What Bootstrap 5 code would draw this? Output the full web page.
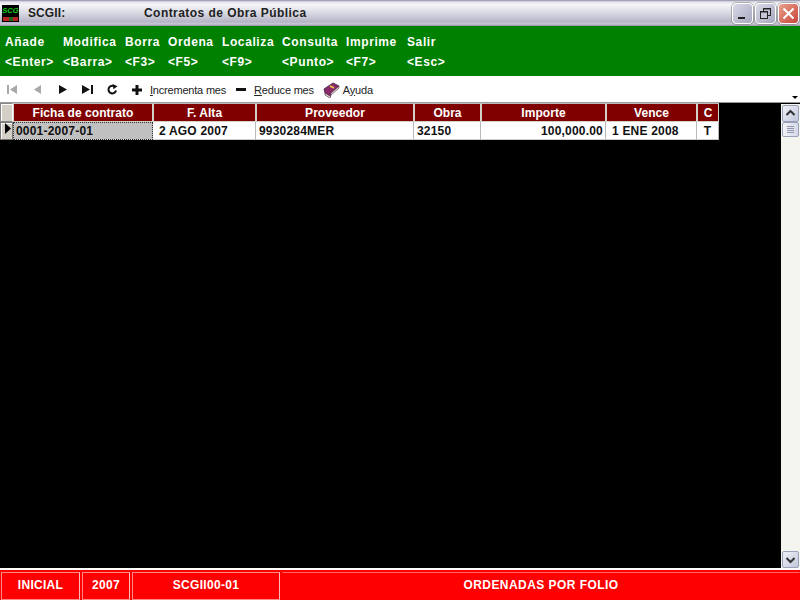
<!DOCTYPE html>
<html lang="es">
<head>
<meta charset="utf-8">
<title>SCGII</title>
<link href="https://cdn.jsdelivr.net/npm/bootstrap@5.3.0/dist/css/bootstrap.min.css" rel="stylesheet">
<style>
html,body{height:100%;margin:0;overflow:hidden}
body{width:800px;height:600px;font-family:"Liberation Sans",Arial,sans-serif;background:#000}
.win{width:800px;height:600px}
.titlebar{height:26px;flex:none;background:linear-gradient(#8d8da6 0,#e6e6ee 2px,#f4f4f8 5px,#d5d5e0 14px,#b4b4c6 22px,#c9c9d8 24px,#8f8f9f 26px);color:#222;font-weight:700;font-size:12px;letter-spacing:.45px;padding-left:2px}
.appico{width:17px;height:17px;background:#000;margin-right:9px;flex:none;overflow:hidden;display:flex;flex-direction:column;align-items:center;line-height:10px;font-size:7.5px;font-style:italic;color:#19d219;letter-spacing:0;padding-top:1px}
.appico::after{content:"";display:block;width:15px;height:4px;margin-top:1px;background:linear-gradient(90deg,#b22 0 40%,#262 40% 70%,#b22 70%)}
.apptitle{width:116px;letter-spacing:.1px}
.winbtn{width:21px;height:21px;border-radius:4px;border:1px solid #fff;box-shadow:0 0 0 .5px #777;background:linear-gradient(135deg,#d9dae6,#a6a8c0);margin-right:2px;flex:none}
.winbtn svg{display:block}
.winbtn-x{background:linear-gradient(135deg,#e9a08c,#c8453a);margin-right:1px}
.menubar{height:50px;flex:none;background:#008000;color:#fff;font-weight:700;font-size:12px;letter-spacing:.6px;display:grid;grid-template-columns:58px 62px 43px 54px 60px 64px 61px auto;grid-template-rows:20px 20px;padding:6px 0 0 5px;line-height:21px}
.toolstrip{height:27px;flex:none;background:#fff;border-bottom:1px solid #9a9a9a;font-size:11px;color:#222;letter-spacing:-.2px;position:relative;padding-top:1px}
.toolstrip svg{display:block;flex:none}
.tool{width:25px;display:flex;justify-content:center}
.toolbtn{display:flex;align-items:center;gap:8px}
.toolbtn span{padding-top:1px}
.plus-btn{margin-left:7px}
.minus-btn{margin-left:10px}
.help-btn{margin-left:9px;gap:3px}
.overflow-caret{position:absolute;right:2px;bottom:3px;border-left:3px solid transparent;border-right:3px solid transparent;border-top:3px solid #000}
.gridarea{flex:1 1 0;min-height:0;background:#000;position:relative}
.tablewrap{flex:1 1 0;min-width:0}
.gridtable{table-layout:fixed;width:719px;margin:0;border-collapse:separate;border-spacing:0;font-size:12px;font-weight:700;letter-spacing:.2px;--bs-table-bg:transparent}
.gridtable th,.gridtable td{padding:0 3px;border:0;white-space:nowrap;overflow:hidden;box-shadow:none}
.gridtable th{height:19px;background:#800000;color:#fff;text-align:center;line-height:16px;border:1px solid #d4d0c8;border-top-color:#bbb;letter-spacing:.05px}
.gridtable td{height:18px;padding-top:1px;background:#fff;color:#111;line-height:16px;border-right:1px solid #b8b8b8;border-bottom:1px solid #ccc}
.gridtable .corner{background:#d4d0c8;border:1px solid #888;border-right:1px solid #fff;box-shadow:inset 1px 1px #fff}
.gridtable .rowmark{background:#d4d0c8;padding:0;border:1px solid #777;box-shadow:inset 1px 1px #fff}
.gridtable .current{background:#c0c0c0;outline:1px dotted #333;outline-offset:-1px}
.gridtable .date-cell{padding-left:6px}
.gridtable .money-cell{padding-right:2px}
.w0{width:13px}.w1{width:140px}.w2{width:103px}.w3{width:158px}.w4{width:67px}.w5{width:125px}.w6{width:91px}.w7{width:22px}
.vscroll{width:19px;flex:none;background:#f5f5f0;margin-top:1px;padding:1px 1px 0 1px}
.sbtn{width:17px;height:17px;border:1px solid #9aa0b8;border-radius:2px;background:linear-gradient(135deg,#eef0f6,#c2c8dc);flex:none}
.sthumb{height:15px;display:flex;flex-direction:column;justify-content:center;gap:1px;align-items:center;background:linear-gradient(90deg,#f2f3f8,#d5d9e8)}
.sthumb i{display:block;width:7px;height:1px;background:#8f96ad}
.statusbar{height:32px;flex:none;border-top:2px solid #fff;background:#f00;padding:2px 0 0 1px;color:#fff;font-size:12px;font-weight:700;letter-spacing:.3px;gap:2px}
.statusbar>div{border:1px solid #f88;border-right-color:#fbb;display:flex;align-items:center;justify-content:center;height:100%;padding-bottom:3px}
.s1{width:79px}.s2{width:48px}.s3{width:148px}.s4{flex:1 1 0;letter-spacing:.45px;border-color:#f00 !important;border-top-color:#f66 !important}
</style>
</head>
<body>
<div class="win d-flex flex-column">
  <div class="titlebar d-flex align-items-center">
    <div class="appico">SCG</div>
    <div class="apptitle">SCGII:</div>
    <div class="flex-grow-1">Contratos de Obra Pública</div>
    <div class="winbtn"><svg width="19" height="19" viewBox="0 0 19 19"><rect x="5" y="13" width="7" height="2" fill="#222"/></svg></div>
    <div class="winbtn"><svg width="19" height="19" viewBox="0 0 19 19" fill="none" stroke="#222"><rect x="7.5" y="4.5" width="7" height="7"/><rect x="4.5" y="7.5" width="7" height="7" fill="#c4c6d8"/><path d="M7 5h8M4 8h8"/></svg></div>
    <div class="winbtn winbtn-x"><svg width="19" height="19" viewBox="0 0 19 19"><path d="M4.5 4.5l10 10M14.5 4.5l-10 10" stroke="#fff" stroke-width="2"/></svg></div>
  </div>

  <div class="menubar">
    <div>Añade</div><div>Modifica</div><div>Borra</div><div>Ordena</div><div>Localiza</div><div>Consulta</div><div>Imprime</div><div>Salir</div>
    <div>&lt;Enter&gt;</div><div>&lt;Barra&gt;</div><div>&lt;F3&gt;</div><div>&lt;F5&gt;</div><div>&lt;F9&gt;</div><div>&lt;Punto&gt;</div><div>&lt;F7&gt;</div><div>&lt;Esc&gt;</div>
  </div>

  <div class="toolstrip d-flex align-items-center">
    <div class="tool"><svg width="11" height="9" viewBox="0 0 11 9" fill="#a8a8a8"><rect x="0" y="0" width="2" height="9"/><path d="M10 0v9L3 4.500z"/></svg></div>
    <div class="tool"><svg width="8" height="9" viewBox="0 0 8 9" fill="#a8a8a8"><path d="M7 0v9L0 4.500z"/></svg></div>
    <div class="tool"><svg width="8" height="9" viewBox="0 0 8 9" fill="#111"><path d="M0 0v9l8-4.500z"/></svg></div>
    <div class="tool"><svg width="11" height="9" viewBox="0 0 11 9" fill="#111"><path d="M0 0v9l8-4.500z"/><rect x="9" y="0" width="2" height="9"/></svg></div>
    <div class="tool"><svg width="11" height="11" viewBox="0 0 11 11" fill="none"><path d="M9 6.500A3.800 3.800 0 1 1 6.500 2" stroke="#111" stroke-width="2"/><path d="M5.500 0l5 2.200-4 3z" fill="#111"/></svg></div>
    <div class="toolbtn plus-btn"><svg width="10" height="10" viewBox="0 0 10 10" fill="#111"><path d="M3.500 0h3v3.500H10v3H6.500V10h-3V6.500H0v-3h3.500z"/></svg><span><u>I</u>ncrementa mes</span></div>
    <div class="toolbtn minus-btn"><svg width="10" height="10" viewBox="0 0 10 10" fill="#111"><rect x="0" y="3" width="10" height="3"/></svg><span><u>R</u>educe mes</span></div>
    <div class="toolbtn help-btn"><svg width="17" height="16" viewBox="0 0 17 16"><path d="M1 7L10 1l6 3-8 7-1 4-5-4z" fill="#8a2a6a" stroke="#3a1a3a" stroke-width=".8"/><path d="M2 11l5 3 1-3 8-7v2l-8 7-1 3-5-3z" fill="#e8e0d0" stroke="#3a1a3a" stroke-width=".6"/><path d="M7 4l4 2" stroke="#f0d040" stroke-width="1.500"/></svg><span>A<u>y</u>uda</span></div>
    <span class="overflow-caret"></span>
  </div>

  <div class="gridarea d-flex">
    <div class="tablewrap">
      <table class="table gridtable">
        <thead>
          <tr>
            <th class="corner w0"></th>
            <th class="w1">Ficha de contrato</th>
            <th class="w2">F. Alta</th>
            <th class="w3">Proveedor</th>
            <th class="w4">Obra</th>
            <th class="w5">Importe</th>
            <th class="w6">Vence</th>
            <th class="w7">C</th>
          </tr>
        </thead>
        <tbody>
          <tr>
            <td class="rowmark"><svg class="d-block ms-1" width="6" height="11" viewBox="0 0 6 11"><path d="M0 0v11l6-5.500z" fill="#000"/></svg></td>
            <td class="current">0001-2007-01</td>
            <td class="date-cell">2 AGO 2007</td>
            <td>9930284MER</td>
            <td>32150</td>
            <td class="text-end money-cell">100,000.00</td>
            <td class="date-cell">1 ENE 2008</td>
            <td class="text-center">T</td>
          </tr>
        </tbody>
      </table>
    </div>
    <div class="vscroll d-flex flex-column">
      <div class="sbtn"><svg class="d-block" width="15" height="15" viewBox="0 0 15 15"><path d="M3.500 9l4-4 4 4" fill="none" stroke="#333" stroke-width="2"/></svg></div>
      <div class="sbtn sthumb"><i></i><i></i><i></i><i></i></div>
      <div class="flex-grow-1"></div>
      <div class="sbtn"><svg class="d-block" width="15" height="15" viewBox="0 0 15 15"><path d="M3.500 6l4 4 4-4" fill="none" stroke="#333" stroke-width="2"/></svg></div>
    </div>
  </div>

  <div class="statusbar d-flex">
    <div class="s1">INICIAL</div>
    <div class="s2">2007</div>
    <div class="s3">SCGII00-01</div>
    <div class="s4">ORDENADAS POR FOLIO</div>
  </div>
</div>
</body>
</html>
